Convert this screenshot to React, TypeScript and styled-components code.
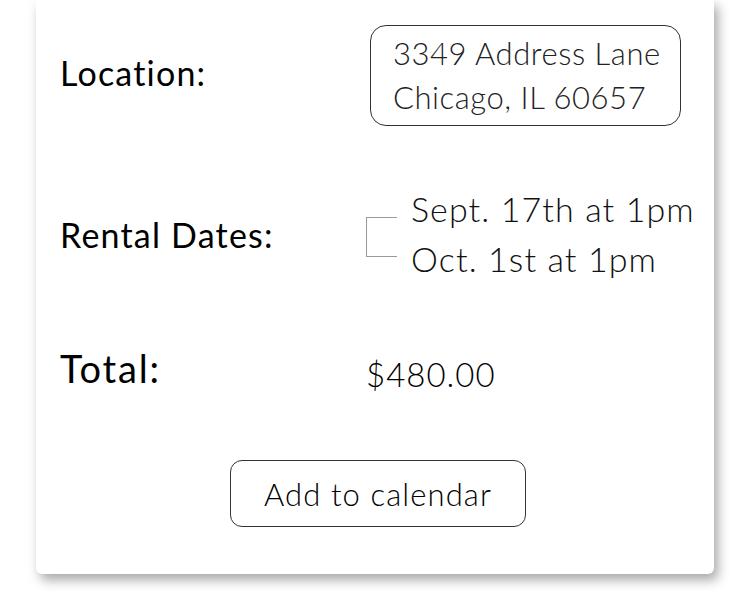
import React from "react";
import styled, { createGlobalStyle } from "styled-components";

const Global = createGlobalStyle`
  html, body { margin: 0; padding: 0; background: #ffffff; }
  body { font-family: "Lato", "Noto Sans", sans-serif; color: #111; }
`;

const Page = styled.div`
  width: 750px;
  height: 602px;
  padding: 0 36px;
  box-sizing: border-box;
  overflow: hidden;
`;

const Card = styled.section`
  width: 678px;
  height: 574px;
  box-sizing: border-box;
  background: #fff;
  border-radius: 0 0 6px 6px;
  box-shadow: 4px 6px 12px rgba(0, 0, 0, 0.35);
  padding: 25px 14px 0 24px;
  display: flex;
  flex-direction: column;
`;

const Row = styled.div<{ $h: number; $mt?: number }>`
  display: grid;
  grid-template-columns: 306px 1fr;
  align-items: center;
  height: ${(p) => p.$h}px;
  margin-top: ${(p) => p.$mt ?? 0}px;
`;

const Label = styled.div<{ $size?: number; $shift?: number; $spacing?: number }>`
  font-size: ${(p) => p.$size ?? 34}px;
  font-weight: 400;
  color: #000;
  letter-spacing: ${(p) => p.$spacing ?? 1.2}px;
  margin-top: ${(p) => p.$shift ?? 0}px;
  white-space: nowrap;
`;

const AddressBox = styled.div`
  justify-self: start;
  margin-left: 4px;
  border: 1px solid #333;
  border-radius: 16px;
  padding: 5px 19px 6px 22px;
  font-size: 31px;
  font-weight: 300;
  line-height: 44px;
  letter-spacing: 0.55px;
  color: #222;
  white-space: nowrap;
`;

const Dates = styled.div`
  display: flex;
  align-items: center;
  gap: 14px;
`;

const Bracket = styled.div`
  flex: none;
  width: 31px;
  height: 40px;
  margin-top: 6px;
  border: 1.5px solid #9a9a9a;
  border-right: none;
  box-sizing: border-box;
`;

const DateList = styled.div`
  font-size: 34px;
  font-weight: 300;
  line-height: 50px;
  letter-spacing: 1.1px;
  color: #111;
  white-space: nowrap;
`;

const Value = styled.div`
  font-size: 33px;
  font-weight: 300;
  letter-spacing: 1px;
  color: #000;
  margin-top: 6px;
`;

const ButtonRow = styled.div`
  display: flex;
  justify-content: center;
  margin-top: 64px;
  padding-right: 4px;
`;

const Button = styled.button`
  width: 296px;
  height: 67px;
  border: 1px solid #333;
  border-radius: 12px;
  background: #fff;
  font-family: "Lato", "Noto Sans", sans-serif;
  font-size: 31px;
  font-weight: 300;
  letter-spacing: 1.1px;
  color: #000;
  cursor: pointer;
`;

export default function App() {
  return (
    <>
      <Global />
      <Page>
        <Card>
          <Row $h={101}>
            <Label $shift={-6}>Location:</Label>
            <AddressBox>
              3349 Address Lane
              <br />
              Chicago, IL 60657
            </AddressBox>
          </Row>
          <Row $h={100} $mt={58}>
            <Label>Rental Dates:</Label>
            <Dates>
              <Bracket />
              <DateList>
                Sept. 17th at 1pm
                <br />
                Oct. 1st at 1pm
              </DateList>
            </Dates>
          </Row>
          <Row $h={50} $mt={62}>
            <Label $size={38} $shift={-6} $spacing={1.8}>Total:</Label>
            <Value>$480.00</Value>
          </Row>
          <ButtonRow>
            <Button>Add to calendar</Button>
          </ButtonRow>
        </Card>
      </Page>
    </>
  );
}
